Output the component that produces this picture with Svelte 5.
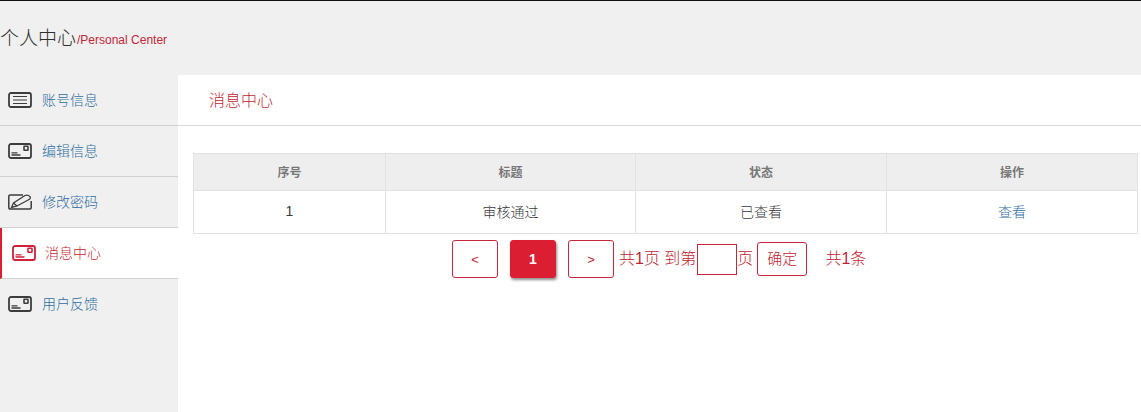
<script>
  const menu = [
    { label: "账号信息", icon: "list" },
    { label: "编辑信息", icon: "card" },
    { label: "修改密码", icon: "pen" },
    { label: "消息中心", icon: "card", active: true },
    { label: "用户反馈", icon: "card" },
  ];
</script>

<div class="page">
  <header class="head">
    <h1>个人中心</h1>
    <span class="en">/Personal Center</span>
  </header>

  <div class="body">
    <nav class="side">
      {#each menu as item}
        <a class="item" class:active={item.active} href="#top">
          <svg class="icon" width="24" height="16" viewBox="0 0 24 16" fill="none" stroke="currentColor">
            {#if item.icon === "list"}
              <rect x="1" y="1" width="22" height="14" rx="2" stroke-width="1.8" />
              <path d="M5 4.5h14M5 8h14M5 11.5h14" stroke-width="1.2" />
            {:else if item.icon === "card"}
              <rect x="1" y="1" width="22" height="14" rx="2" stroke-width="1.8" />
              <path d="M3.5 12h9M3.5 9.8h6" stroke-width="1.3" />
              <rect x="16" y="3.2" width="4" height="4" rx="0.5" stroke-width="1.6" />
            {:else}
              <path d="M15 1H2a1.2 1.2 0 0 0-1.2 1.2v11.6A1.2 1.2 0 0 0 2 15h20a1.2 1.2 0 0 0 1.2-1.2V7" stroke-width="1.5" />
              <path d="M3.5 13.5l2-4.5L17 1.5c1.5-.7 3.8-.2 5 1.2 .6 1 .2 2-.5 2.6L9 12z" stroke-width="1.3" />
              <path d="M5.5 9L9 12" stroke-width="1.1" />
            {/if}
          </svg>
          <span>{item.label}</span>
        </a>
      {/each}
    </nav>

    <main class="main">
      <div class="title"><span>消息中心</span></div>

      <table>
        <thead>
          <tr>
            <th class="c1">序号</th>
            <th class="c2">标题</th>
            <th class="c3">状态</th>
            <th>操作</th>
          </tr>
        </thead>
        <tbody>
          <tr>
            <td><span class="cell">1</span></td>
            <td><span class="cell">审核通过</span></td>
            <td><span class="cell">已查看</span></td>
            <td><a class="cell link" href="#top">查看</a></td>
          </tr>
        </tbody>
      </table>

      <div class="pager">
        <button class="pg">&lt;</button>
        <button class="pg cur">1</button>
        <button class="pg">&gt;</button>
        <span class="txt first">共1页 到第</span>
        <input class="jump" type="text" />
        <span class="txt">页</span>
        <button class="ok">确定</button>
        <span class="txt total">共1条</span>
      </div>
    </main>
  </div>
</div>

<style>
  :global(body) {
    margin: 0;
    background: #f0f0f0;
    font-family: "Liberation Sans", "Noto Sans CJK SC", sans-serif;
  }

  .page {
    height: 412px;
    overflow: hidden;
    display: flex;
    flex-direction: column;
    border-top: 1px solid #111;
    box-sizing: border-box;
  }

  .head {
    height: 74px;
    flex: none;
    display: flex;
    align-items: center;
    padding-bottom: 4px;
    box-sizing: border-box;
  }

  h1 {
    margin: 0 1px 0 0;
    font-size: 19px;
    font-weight: 300;
    color: #2e2e2e;
  }

  .en {
    font-size: 12px;
    color: #c4263a;
    margin-top: 7px;
  }

  .body {
    flex: 1;
    display: flex;
  }

  .side {
    width: 178px;
    flex: none;
  }

  .item {
    height: 51px;
    box-sizing: border-box;
    display: flex;
    align-items: center;
    gap: 10px;
    padding-left: 8px;
    border-bottom: 1px solid #d2d2d2;
    color: #2f6ea3;
    font-size: 14px;
    font-weight: 300;
    text-decoration: none;
  }

  .item span {
    margin-bottom: 2px;
  }

  .item:last-child {
    border-bottom: none;
  }

  .item:last-child span {
    margin-bottom: 4px;
  }

  .icon {
    color: #3c3c3c;
    flex: none;
  }

  .item:last-child .icon {
    margin-bottom: 1px;
  }

  .item.active {
    background: #fff;
    color: #c01f33;
    border-left: 2px solid #dc1e32;
    padding-left: 10px;
    gap: 9px;
  }

  .item.active .icon {
    color: #d0213a;
  }

  .main {
    flex: 1;
    background: #fff;
    padding: 0 3px 0 15px;
    min-width: 0;
  }

  .title {
    height: 51px;
    box-sizing: border-box;
    margin: 0 -3px 0 -15px;
    padding-left: 31px;
    padding-bottom: 2px;
    border-bottom: 1px solid #d8d8d8;
    display: flex;
    align-items: center;
    font-size: 16px;
    font-weight: 300;
    color: #c01f33;
  }

  table {
    width: 945px;
    margin-top: 27px;
    border-collapse: collapse;
    table-layout: fixed;
    color: #333;
  }

  th, td {
    border: 1px solid #e2e2e2;
    text-align: center;
    padding: 0;
  }

  th {
    height: 35px;
    background: #eeeeee;
    font-size: 12px;
    color: #777;
    font-weight: 700;
    padding-bottom: 1px;
  }

  td {
    height: 40px;
    font-size: 14px;
    font-weight: 300;
    padding-bottom: 2px;
  }

  .cell {
    color: #3a3a3a;
  }

  .c1 { width: 191px; }
  .c2 { width: 249px; }
  .c3 { width: 250px; }

  .cell.link {
    color: #2f6ea3;
    text-decoration: none;
  }

  .pager {
    margin-top: 6px;
    padding-left: 259px;
    display: flex;
    align-items: flex-start;
    height: 38px;
    color: #c01f33;
    font-size: 16px;
    font-weight: 300;
  }

  button {
    font-family: inherit;
    font-weight: 300;
    background: #fff;
    padding: 0;
    color: #c01f33;
    border: 1px solid #c4263a;
    border-radius: 3px;
    cursor: pointer;
  }

  .pg {
    width: 46px;
    height: 38px;
    margin-right: 12px;
    font-size: 13px;
  }

  .pg.cur {
    background: #dc1e32;
    border-color: #dc1e32;
    color: #fff;
    font-size: 14px;
    font-weight: 700;
    box-shadow: 1px 2px 3px rgba(0, 0, 0, 0.45);
  }

  .txt {
    white-space: nowrap;
    line-height: 38px;
  }

  .first {
    margin-left: -7px;
    margin-right: 1px;
  }

  .jump {
    width: 40px;
    height: 31px;
    margin-top: 4px;
    box-sizing: border-box;
    border: 1px solid #c4263a;
    outline: none;
    padding: 0;
    background: #fff;
  }

  .ok {
    width: 50px;
    height: 34px;
    margin: 2px 0 0 4px;
    font-size: 15px;
    padding-bottom: 4px;
  }

  .total {
    margin-left: 18px;
  }
</style>
